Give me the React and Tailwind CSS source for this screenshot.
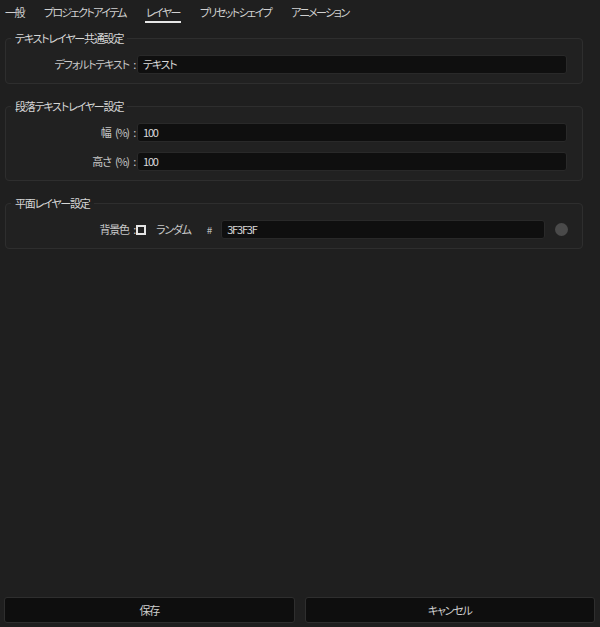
import React from 'react';

const tabs = ['一般', 'プロジェクトアイテム', 'レイヤー', 'プリセットシェイプ', 'アニメーション'];

function Group({ title, children }) {
  return (
    <fieldset className="mr-[17px] rounded-[4px] border border-[#2e2e2e] bg-[#212121] px-0 pb-[9px] pt-[9px]">
      <legend className="ml-[5px] px-[4px] text-[11px] leading-4 text-[#d6d6d6]">{title}</legend>
      <div className="flex flex-col gap-[10px]">{children}</div>
    </fieldset>
  );
}

function Field({ label, value }) {
  return (
    <div className="flex items-center">
      <span className="w-[129px] shrink-0 text-right text-[11px] text-[#c8c8c8]">{label}</span>
      <div className="ml-[2px] mr-[15px] flex h-[19px] flex-1 items-center rounded-[3px] border border-[#292929] bg-[#0f0f0f] px-[5px] text-[11px] text-[#d8d8d8]">
        {value}
      </div>
    </div>
  );
}

export default function App() {
  return (
    <div className="flex h-[627px] w-[600px] flex-col bg-[#1f1f1f] font-['Noto_Sans_CJK_JP','Noto_Sans',sans-serif] tracking-[-1.2px] [word-spacing:3px] [font-feature-settings:'palt']">
      {/* tabs */}
      <div className="flex h-[30px] gap-5 px-[5px] pt-[4px] tracking-[-1.6px]">
        {tabs.map((t) => (
          <div key={t} className="flex flex-col">
            <span className="text-[11px] leading-4 text-[#d0d0d0]">{t}</span>
            {t === 'レイヤー' && <div className="mx-[-1px] mt-[1px] h-[2px] bg-[#e6e6e6]" />}
          </div>
        ))}
      </div>

      <div className="flex flex-1 flex-col gap-[14px] pl-[5px]">
        <Group title="テキストレイヤー共通設定">
          <Field label="デフォルトテキスト :" value="テキスト" />
        </Group>

        <Group title="段落テキストレイヤー設定">
          <Field label="幅 (%) :" value="100" />
          <Field label="高さ (%) :" value="100" />
        </Group>

        <Group title="平面レイヤー設定">
          <div className="flex items-center">
            <span className="w-[129px] shrink-0 text-right text-[11px] text-[#c8c8c8]">背景色 :</span>
            <span className="ml-[1px] h-[10px] w-[10px] shrink-0 border-2 border-[#e4e4e4]" />
            <span className="ml-[10px] text-[11px] text-[#c8c8c8]">ランダム</span>
            <span className="ml-[16px] text-[10px] text-[#bdbdbd]">#</span>
            <div className="ml-[10px] flex h-[19px] flex-1 items-center rounded-[3px] border border-[#292929] bg-[#0f0f0f] px-[5px] text-[11px] text-[#d8d8d8]">
              3F3F3F
            </div>
            <span className="ml-[10px] mr-[14px] h-[13px] w-[13px] shrink-0 rounded-full bg-[#4a4a4a]" />
          </div>
        </Group>
      </div>

      {/* footer buttons */}
      <div className="flex gap-[10px] pb-[4px] pl-[4px] pr-[5px]">
        <button className="h-[26px] flex-1 rounded-[3px] border border-[#2e2e2e] bg-[#0e0e0e] text-[11px] text-[#cfcfcf]">保存</button>
        <button className="h-[26px] flex-1 rounded-[3px] border border-[#2e2e2e] bg-[#0e0e0e] text-[11px] text-[#cfcfcf]">キャンセル</button>
      </div>
    </div>
  );
}
